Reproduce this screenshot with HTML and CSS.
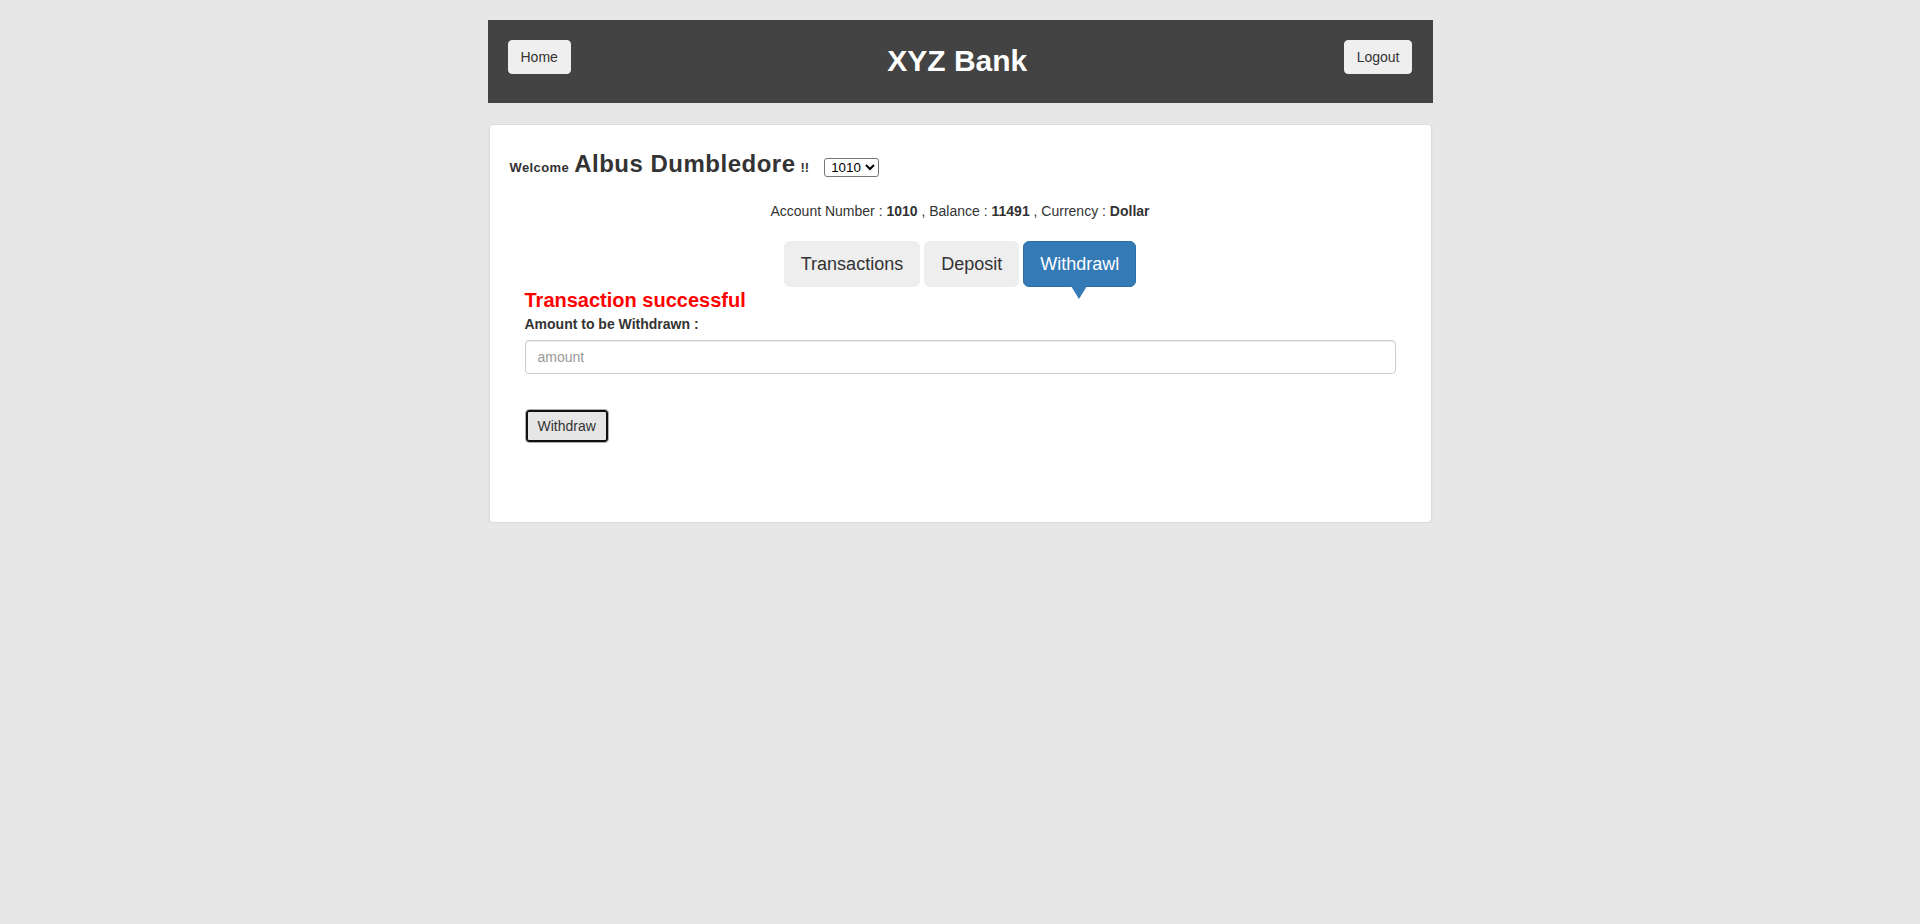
FILE: index.html
```html
<!DOCTYPE html>
<html lang="en">
<head>
<meta charset="utf-8">
<title>XYZ Bank</title>
<link rel="stylesheet" href="styles.css">
</head>
<body>
<div class="page">
  <header class="header">
    <button class="btn btn-home" type="button">Home</button>
    <h2 class="brand">XYZ Bank</h2>
    <button class="btn btn-logout" type="button">Logout</button>
  </header>

  <main class="card">
    <div class="welcome">
      <strong class="welcome-text">Welcome</strong>
      <span class="customer-name">Albus Dumbledore</span>
      <strong class="bang">!!</strong>
      <select class="account-select">
        <option>1010</option>
      </select>
    </div>

    <div class="account-info">
      Account Number : <strong>1010</strong> , Balance : <strong>11491</strong> , Currency : <strong>Dollar</strong>
    </div>

    <nav class="tabs">
      <button class="tab" type="button">Transactions</button>
      <button class="tab" type="button">Deposit</button>
      <button class="tab tab-active" type="button">Withdrawl</button>
    </nav>

    <div class="form-area">
      <div class="message">Transaction successful</div>
      <form class="withdraw-form">
        <label class="form-label" for="amount">Amount to be Withdrawn :</label>
        <input class="form-control" id="amount" type="number" placeholder="amount">
        <button class="btn-submit" type="button">Withdraw</button>
      </form>
    </div>
  </main>
</div>
</body>
</html>
```

FILE: styles.css
```css
* {
  box-sizing: border-box;
}

html, body {
  margin: 0;
  padding: 0;
}

body {
  background: #e7e7e7;
  font-family: "Liberation Sans", Arial, sans-serif;
  font-size: 14px;
  line-height: 20px;
  color: #333;
}

.page {
  width: 945px;
  margin: 0 auto;
  padding-top: 20px;
}

.header {
  height: 83px;
  background: #434343;
  padding: 20px;
  display: flex;
  justify-content: space-between;
  align-items: flex-start;
}

.btn {
  font-family: "Liberation Sans", Arial, sans-serif;
  font-size: 14px;
  line-height: 20px;
  padding: 6px 12px;
  border: 1px solid #efefef;
  border-radius: 4px;
  background: #efefef;
  color: #333;
  cursor: pointer;
}

.brand {
  margin: 4px 0 0;
  font-size: 30px;
  line-height: 33px;
  font-weight: bold;
  color: #fff;
}

.card {
  margin: 21px 1px 0;
  background: #fff;
  border: 1px solid #dcdcdc;
  border-radius: 4px;
  box-shadow: 0 1px 2px rgba(0, 0, 0, 0.08);
  padding: 27px 20px 79px;
}

.welcome {
  display: flex;
  align-items: baseline;
}

.welcome-text {
  font-size: 13px;
  letter-spacing: 0.4px;
  line-height: 24px;
}

.customer-name {
  font-size: 24px;
  font-weight: bold;
  line-height: 24px;
  letter-spacing: 0.5px;
  margin-left: 5px;
}

.bang {
  font-size: 13px;
  line-height: 24px;
  margin-left: 5px;
}

.account-select {
  margin-left: 15px;
  font-family: "Liberation Sans", Arial, sans-serif;
  font-size: 13.333px;
  height: 19px;
  width: 55px;
  padding: 0 0 0 2px;
  border: 1px solid #767676;
  border-radius: 3px;
  background: #fff;
  color: #000;
}

.account-info {
  margin-top: 21px;
  text-align: center;
  line-height: 20px;
}

.tabs {
  margin-top: 20px;
  display: flex;
  justify-content: center;
  gap: 4px;
}

.tab {
  position: relative;
  font-family: "Liberation Sans", Arial, sans-serif;
  font-size: 18px;
  line-height: 24px;
  padding: 10px 16px;
  border: 1px solid #eee;
  border-radius: 6px;
  background: #eee;
  color: #333;
  cursor: pointer;
}

.tab-active {
  background: #337ab7;
  border-color: #2e6da4;
  color: #fff;
}

.tab-active::after {
  content: "";
  position: absolute;
  top: 100%;
  left: 50%;
  margin-left: -9px;
  border-left: 8px solid transparent;
  border-right: 8px solid transparent;
  border-top: 13px solid #337ab7;
}

.form-area {
  padding: 0 15px;
}

.message {
  margin-top: 2px;
  font-size: 20px;
  line-height: 22px;
  font-weight: bold;
  color: #f00;
}

.withdraw-form {
  display: flex;
  flex-direction: column;
  align-items: flex-start;
  margin-top: 3px;
}

.form-label {
  font-weight: bold;
  margin-bottom: 6px;
}

.form-control {
  width: 100%;
  height: 34px;
  padding: 6px 12px;
  font-family: "Liberation Sans", Arial, sans-serif;
  font-size: 14px;
  color: #555;
  background: #fff;
  border: 1px solid #ccc;
  border-radius: 4px;
  box-shadow: inset 0 1px 1px rgba(0, 0, 0, 0.075);
}

.form-control::placeholder {
  color: #999;
}

.btn-submit {
  margin-top: 35px;
  font-family: "Liberation Sans", Arial, sans-serif;
  font-size: 14px;
  line-height: 20px;
  padding: 6px 12px;
  background: #e6e6e6;
  border: 1px solid #adadad;
  border-radius: 4px;
  box-shadow: inset 0 0 0 2px #111;
  color: #333;
}
```
